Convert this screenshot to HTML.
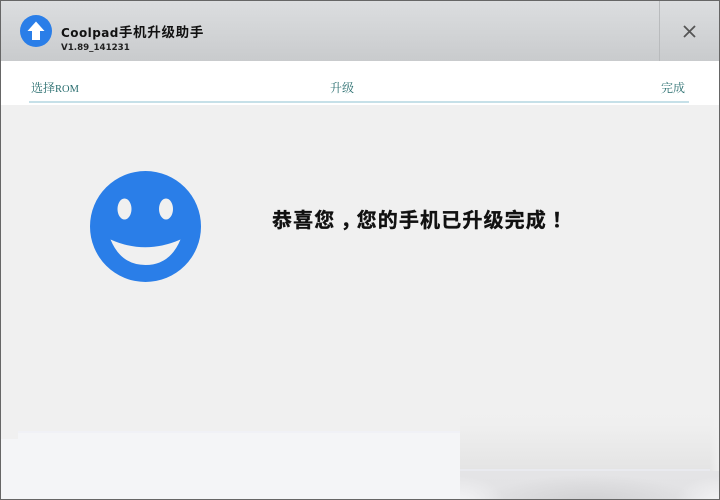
<!DOCTYPE html>
<html>
<head>
<meta charset="utf-8">
<style>
html,body{margin:0;padding:0;width:720px;height:500px;overflow:hidden;background:#f0f0f0}
#app{position:relative;width:720px;height:500px;overflow:hidden;background:#f0f0f0}
.abs{position:absolute;white-space:nowrap}
.step{font-family:"Liberation Serif","Noto Serif CJK SC",serif;font-size:12px;line-height:14px;color:#2b6f70;top:81px}
</style>
</head>
<body>
<div id="app">
  <div class="abs" style="left:0;top:0;width:720px;height:61px;background:linear-gradient(#dcdee0,#c9cbcd)"></div>
  <div class="abs" style="left:659px;top:0;width:1px;height:61px;background:#b9bbbd"></div>
  <div class="abs" style="left:0;top:61px;width:720px;height:44px;background:#fff"></div>
  <div class="abs" style="left:29px;top:101px;width:660px;height:2px;background:#c6e0e8"></div>

  <svg class="abs" style="left:20px;top:15px" width="32" height="32" viewBox="0 0 32 32">
    <circle cx="16" cy="16" r="16" fill="#2a7ee8"/>
    <path d="M16 6.5 L24.5 16 L20 16 L20 25 L12 25 L12 16 L7.5 16 Z" fill="#fff"/>
  </svg>
  <div class="abs" style="left:61px;top:23px;font-family:'DejaVu Sans','Noto Sans CJK SC',sans-serif;font-weight:bold;font-size:12px;line-height:17px;color:#111;letter-spacing:.45px">Coolpad<span style="font-size:13.5px;letter-spacing:.7px;font-family:'Noto Sans CJK SC',sans-serif">手机升级助手</span></div>
  <div class="abs" style="left:61px;top:42px;font-family:'DejaVu Sans',sans-serif;font-weight:bold;font-size:8.7px;line-height:13px;color:#222">V1.89_141231</div>
  <svg class="abs" style="left:683px;top:25px" width="13" height="13" viewBox="0 0 13 13">
    <path d="M1 1 L12 12 M12 1 L1 12" stroke="#555" stroke-width="1.8" fill="none"/>
  </svg>

  <div class="abs step" style="left:31px">选择<span style="font-size:10.5px">ROM</span></div>
  <div class="abs step" style="left:330px">升级</div>
  <div class="abs step" style="left:661px">完成</div>

  <svg class="abs" style="left:89px;top:171px" width="113" height="112" viewBox="0 0 113 112">
    <circle cx="56.5" cy="55.5" r="55.5" fill="#2a7ee8"/>
    <ellipse cx="35.5" cy="38" rx="7" ry="10.5" fill="#f0f0f0"/>
    <ellipse cx="77" cy="38" rx="7" ry="10.5" fill="#f0f0f0"/>
    <path d="M21.5 68.5 Q56 84 91.5 68.5 Q81 94 56.5 94 Q32 94 21.5 68.5 Z" fill="#f0f0f0"/>
  </svg>

  <div class="abs" style="left:272px;top:206px;font-family:'Noto Sans CJK SC',sans-serif;font-weight:bold;font-size:20px;line-height:26px;letter-spacing:1.15px;color:#111;-webkit-text-stroke:.35px #111">恭喜您<span style="position:relative;left:5px">，</span>您的手机已升级完成<span style="font-family:'Noto Sans CJK TC',sans-serif">！</span></div>

  <div class="abs" style="left:18px;top:431px;width:442px;height:69px;background:#f4f5f7;border-top:2px solid #f0f1f6;box-sizing:border-box"></div>
  <div class="abs" style="left:0;top:439px;width:18px;height:61px;background:#f4f5f7"></div>
  <div class="abs" style="left:460px;top:405px;width:260px;height:66px;background:linear-gradient(90deg,rgba(240,240,240,0) 96%,#f0f0f0 100%),linear-gradient(#f0f0f0,#efefef 30%,#e4e4e4)"></div>
  <div class="abs" style="left:460px;top:469px;width:250px;height:2px;background:#e9eaef"></div>
  <div class="abs" style="left:460px;top:471px;width:260px;height:29px;background:radial-gradient(ellipse 45px 28px at 0 32px,#f4f4f6,rgba(244,244,246,0)),radial-gradient(ellipse 45px 28px at 260px 32px,#f4f4f6,rgba(244,244,246,0)),radial-gradient(ellipse 110px 28px at 130px 32px,#d0d0d2,rgba(208,208,210,0)),linear-gradient(#e4e4e6,#e2e2e4)"></div>

  <div class="abs" style="left:0;top:0;width:718px;height:498px;border:1px solid #666"></div>
</div>
</body>
</html>
